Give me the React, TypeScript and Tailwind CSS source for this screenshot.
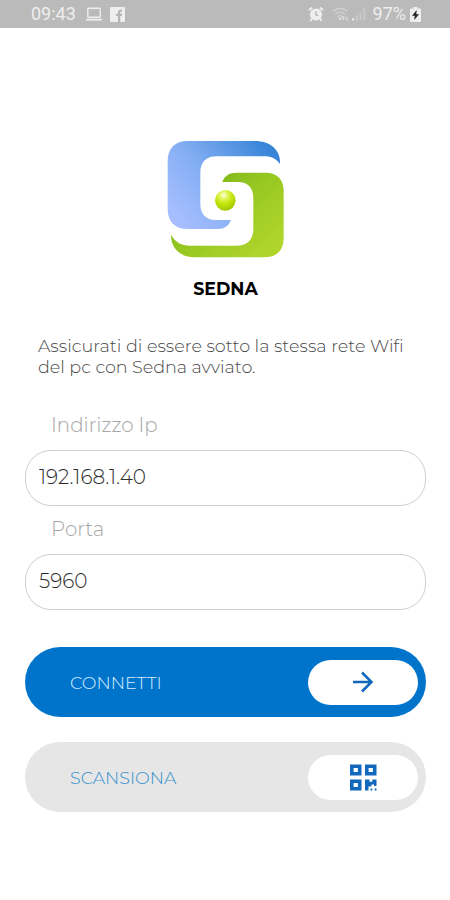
import { useState } from 'react'
import type { ReactNode } from 'react'

interface FieldProps {
  label: string
  value: string
  labelClassName: string
  onChange: (value: string) => void
}

interface ActionButtonProps {
  label: string
  icon: ReactNode
  className: string
}

export default function App() {
  const [ip, setIp] = useState('192.168.1.40')
  const [port, setPort] = useState('5960')

  return (
    <div className="flex h-[900px] w-[450px] flex-col overflow-hidden bg-white font-['Montserrat','Inter',sans-serif] font-light">
      <StatusBar />

      <main className="flex flex-col pt-[102px] pr-[24px] pl-[25px]">
        <SednaLogo className="mr-px h-[140px] w-[140px] self-center" />
        <h1 className="mt-[8px] text-center text-[17.4px] leading-[22px] font-bold text-black">SEDNA</h1>

        <p className="mt-[35px] pl-[13px] text-[17.6px] leading-[21px] whitespace-nowrap text-[#4a4a4a]">
          <span className="block">Assicurati di essere sotto la stessa rete Wifi</span>
          <span className="block tracking-[-0.04px]">del pc con Sedna avviato.</span>
        </p>

        <Field label="Indirizzo Ip" value={ip} labelClassName="mt-[36px]" onChange={setIp} />
        <Field label="Porta" value={port} labelClassName="mt-[11px]" onChange={setPort} />

        <ActionButton
          label="CONNETTI"
          icon={<ArrowIcon className="h-[30px] w-[30px]" />}
          className="mt-[37px] bg-[#0074cb] text-[#d9efff]"
        />
        <ActionButton
          label="SCANSIONA"
          icon={<QrIcon className="h-[27px] w-[27px]" />}
          className="mt-[25px] bg-[#e6e6e6] text-[#3290cb]"
        />
      </main>
    </div>
  )
}

function StatusBar() {
  return (
    <header className="flex h-[28px] shrink-0 items-center bg-[#bababa] pr-[29px] pl-[31px] font-['Roboto',sans-serif] text-[18px] leading-[28px] font-normal text-[#eeeeee]">
      <span>09:43</span>
      <LaptopIcon className="ml-[9px] h-[16px] w-[18px]" />
      <FacebookIcon className="ml-[7px] h-[15px] w-[15px]" />
      <AlarmIcon className="ml-auto h-[16px] w-[16px]" />
      <WifiIcon className="ml-[8px] h-[16px] w-[17px]" />
      <SignalIcon className="ml-[3px] h-[14px] w-[14px]" />
      <span className="ml-[7px]">97%</span>
      <BatteryIcon className="ml-[4px] h-[15px] w-[11px]" />
    </header>
  )
}

function Field({ label, value, labelClassName, onChange }: FieldProps) {
  return (
    <label className="flex flex-col">
      <span className={`pl-[26px] text-[19.8px] leading-[25px] text-[#a5a5a5] ${labelClassName}`}>{label}</span>
      <input
        type="text"
        value={value}
        onChange={(e) => onChange(e.target.value)}
        className="mt-[12px] h-[56px] w-full rounded-[26px] border border-[#cfcfcf] bg-white pr-4 pb-[2px] pl-[13px] text-[20px] text-[#2c2c2c] outline-none"
      />
    </label>
  )
}

function ActionButton({ label, icon, className }: ActionButtonProps) {
  return (
    <button
      type="button"
      className={`flex h-[70px] w-full items-center justify-between rounded-full pr-[8px] pl-[45px] text-[17.5px] ${className}`}
    >
      <span className="pt-[3px]">{label}</span>
      <span className="flex h-[45px] w-[110px] items-center justify-center rounded-full bg-white text-[#1268bd]">
        {icon}
      </span>
    </button>
  )
}

function SednaLogo({ className }: { className?: string }) {
  return (
    <svg className={className} viewBox="0 0 420 420">
      <defs>
        <linearGradient id="sednaBlue" x1="0" y1="0.75" x2="1" y2="0.1">
          <stop offset="0" stopColor="#a6beff" />
          <stop offset="0.4" stopColor="#84aef3" />
          <stop offset="1" stopColor="#2f80d4" />
        </linearGradient>
        <linearGradient id="sednaGreen" x1="0.2" y1="0.1" x2="1" y2="0.8">
          <stop offset="0" stopColor="#78b51a" />
          <stop offset="0.45" stopColor="#98c822" />
          <stop offset="1" stopColor="#b0d62c" />
        </linearGradient>
        <radialGradient id="sednaBall" cx="0.42" cy="0.25" r="0.75">
          <stop offset="0" stopColor="#fcffe4" />
          <stop offset="0.22" stopColor="#e6f76a" />
          <stop offset="0.55" stopColor="#c6e60c" />
          <stop offset="1" stopColor="#a0c800" />
        </radialGradient>
      </defs>
      <path
        fill="url(#sednaBlue)"
        d="M375 102C362 84 346 79 325 79H184C154 79 136 97 136 128V222C136 252 153 270 182 270H228C221 288 208 297 188 297H98C60 297 38 275 38 237V94C38 55 60 33 99 33H300C346 33 378 61 375 102Z"
      />
      <path
        fill="url(#sednaGreen)"
        d="M202 156C208 138 222 128 244 128H332C366 128 386 148 386 182V324C386 361 365 382 328 382H119C77 382 47 356 48 314C61 337 80 347 105 347H244C277 347 295 329 295 296V204C295 174 279 156 249 156Z"
      />
      <circle cx="211" cy="211" r="31" fill="url(#sednaBall)" />
    </svg>
  )
}

// Icon components
function ArrowIcon({ className }: { className?: string }) {
  return (
    <svg className={className} viewBox="0 0 30 30" fill="none" stroke="currentColor" strokeWidth="2.5">
      <path d="M5 15h18.5M14 5.5 23.5 15 14 24.5" />
    </svg>
  )
}

function QrIcon({ className }: { className?: string }) {
  return (
    <svg className={className} viewBox="0 0 27 27" fill="currentColor">
      <path
        fillRule="evenodd"
        d="M0 .5h11.5v11H0zM3.6 3.9v4.2h4.3V3.900zM15 .5h11.500v11H15zM18.600 3.900v4.200h4.300V3.900zM0 15.500h11.500v11H0zM3.600 18.900v4.200h4.300v-4.200z"
      />
      <path d="M15 15.500h4.500v2.200h2.800v-2.200h4.200v6.600H24v-1.500h-2.500v2h-3v3.900H15zM20.500 24.500h1.800v2h-1.800zM24.700 24.500h1.800v2h-1.800z" />
    </svg>
  )
}

function LaptopIcon({ className }: { className?: string }) {
  return (
    <svg className={className} viewBox="0 0 18 16" fill="none" stroke="currentColor" strokeWidth="1.4">
      <rect x="2.8" y="2.2" width="12.4" height="9" rx="0.8" />
      <path d="M1 13.7h16" strokeWidth="1.8" />
    </svg>
  )
}

function FacebookIcon({ className }: { className?: string }) {
  return (
    <svg className={className} viewBox="0 0 15 15">
      <rect width="15" height="15" rx="1" fill="currentColor" />
      <path d="M8 15V9H6V6.800h2V5.200C8 3.300 9 2.400 10.800 2.400h1.300v2.100h-1c-.7 0-.9.4-.9 1v1.300h1.900L11.800 9h-1.600v6z" fill="#b5b5b5" />
    </svg>
  )
}

function AlarmIcon({ className }: { className?: string }) {
  return (
    <svg className={className} viewBox="0 0 16 16" fill="none" stroke="currentColor">
      <circle cx="8" cy="8.5" r="6" fill="currentColor" stroke="none" />
      <path d="M1 4.3 4.2 1.5M15 4.3l-3.200-2.800M3.800 12.800 2.500 15M12.200 12.800l1.300 2.200" strokeWidth="2" />
      <path d="M8 5.200v3.600l2.300 1.200" stroke="#b0b0b0" strokeWidth="1.2" />
    </svg>
  )
}

function WifiIcon({ className }: { className?: string }) {
  return (
    <svg className={className} viewBox="0 0 18 16" fill="none" stroke="#d2d2d2" strokeWidth="1.4">
      <path d="M1 5.500C5.500 1 12 1 16 5.500M3.300 8.300c3.300-3.100 7.300-3.100 10.200 0M6 11c2-1.800 4-1.800 5.500 0" />
      <path d="m7 12 2 2.500 2-2.500z" fill="#e8e8e8" stroke="none" />
      <path d="M12.300 14.800v-4M10.800 12.200l1.500-1.600 1.500 1.600M15.800 10.500v4M14.400 13l1.400 1.600 1.400-1.600" stroke="#e0e0e0" strokeWidth="1" />
    </svg>
  )
}

function SignalIcon({ className }: { className?: string }) {
  return (
    <svg className={className} viewBox="0 0 15 15" fill="#c8c8c8">
      <path d="M0 12h2.400v2.500H0z" fill="#e6e6e6" />
      <path d="M4 9h2.400v5.500H4zM8 5.500h2.400v9H8zM12 1.500h2.400v13H12z" />
    </svg>
  )
}

function BatteryIcon({ className }: { className?: string }) {
  return (
    <svg className={className} viewBox="0 0 11 15">
      <path d="M3.500 0h4v1.500H10c.6 0 1 .4 1 1V14c0 .6-.4 1-1 1H1c-.6 0-1-.4-1-1V2.500c0-.6.4-1 1-1h2.500z" fill="currentColor" />
      <path d="M6.700 3 2 8.700h2.700L4.300 13 9 7.200H6.300z" fill="#252525" />
    </svg>
  )
}
